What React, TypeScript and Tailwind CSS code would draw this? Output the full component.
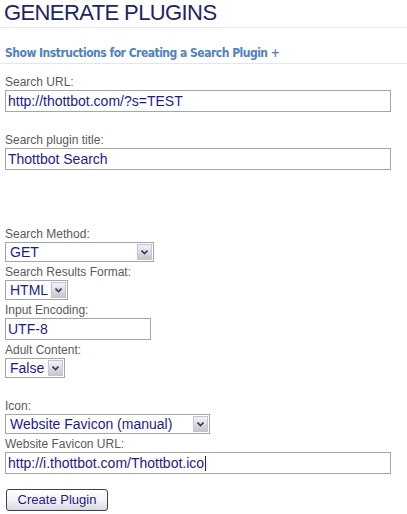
import React from "react";

const labelCls =
  "h-[15px] leading-[15px] text-[12px] text-[#5a5a5a] font-['Liberation_Sans',Arial,sans-serif] whitespace-nowrap";

const Label = ({ children }: { children: React.ReactNode }) => (
  <div className={labelCls}>{children}</div>
);

const TextBox = ({
  value,
  width,
  caret,
}: {
  value: string;
  width: string;
  caret?: boolean;
}) => (
  <div
    className={`${width} h-[22px] border border-[#a5a5a5] bg-white pl-[2px] flex items-center text-[14px] text-[#1b1b8c] font-['Liberation_Sans',Arial,sans-serif] whitespace-nowrap overflow-hidden`}
  >
    <span>{value}</span>
    {caret && <span className="w-px h-[15px] bg-[#1b1b8c] ml-[1px]" />}
  </div>
);

const SelectBox = ({ value, width }: { value: string; width: string }) => (
  <div
    className={`${width} h-[20px] border border-[#a5a5a5] bg-white flex items-stretch text-[14px] text-[#1b1b8c] font-['Liberation_Sans',Arial,sans-serif] whitespace-nowrap`}
  >
    <div className="flex-1 pl-[4px] flex items-center overflow-hidden">{value}</div>
    <div className="w-[15px] m-px border border-[#c3c3d3] bg-gradient-to-b from-[#f2f2f6] to-[#c6c6d4] flex items-center justify-center">
      <svg width="7" height="5" viewBox="0 0 7 5">
        <path d="M0.5 0.5 L3.5 3.5 L6.5 0.5" stroke="#3c3c4c" strokeWidth="1.6" fill="none" />
      </svg>
    </div>
  </div>
);

export default function App() {
  return (
    <div className="w-[407px] h-[514px] bg-white overflow-hidden">
      {/* page heading */}
      <div className="h-[28px] border-b border-[#e6e6e6] pl-[4px]">
        <h1 className="leading-[26px] text-[22px] text-[#1e2466] font-['Liberation_Sans',Arial,sans-serif] tracking-[-0.6px]">
          GENERATE PLUGINS
        </h1>
      </div>

      <div className="pt-[17px] pb-[2px] px-[5px] border-b border-[#e6e6e6]">
        <a className="block leading-[16px] text-[12px] font-bold text-[#4f82bd] font-['DejaVu_Sans_Condensed','Liberation_Sans',sans-serif] tracking-[-0.5px]">
          Show Instructions for Creating a Search Plugin +
        </a>
      </div>

      <form className="px-[5px] pt-[11px] flex flex-col">
        <Label>Search URL:</Label>
        <TextBox value="http://thottbot.com/?s=TEST" width="w-[386px]" />

        <div className="mt-[21px]">
          <Label>Search plugin title:</Label>
          <TextBox value="Thottbot Search" width="w-[386px]" />
        </div>

        <div className="mt-[57px]">
          <Label>Search Method:</Label>
          <SelectBox value="GET" width="w-[149px]" />
        </div>

        <div className="mt-[3px]">
          <Label>Search Results Format:</Label>
          <SelectBox value="HTML" width="w-[63px]" />
        </div>

        <div className="mt-[3px]">
          <Label>Input Encoding:</Label>
          <TextBox value="UTF-8" width="w-[146px]" />
        </div>

        <div className="mt-[3px]">
          <Label>Adult Content:</Label>
          <SelectBox value="False" width="w-[60px]" />
        </div>

        <div className="mt-[21px]">
          <Label>Icon:</Label>
          <SelectBox value="Website Favicon (manual)" width="w-[205px]" />
        </div>

        <div className="mt-[3px]">
          <Label>Website Favicon URL:</Label>
          <TextBox value="http://i.thottbot.com/Thottbot.ico" width="w-[386px]" caret />
        </div>

        <div className="mt-[12px]">
          <button
            type="button"
            className="ml-px w-[102px] h-[22px] rounded-[3px] border border-[#3f3f4f] bg-gradient-to-b from-white via-[#f4f4f6] to-[#d8d8e2] text-[13px] text-[#1b1b8c] font-['Liberation_Sans',Arial,sans-serif]"
          >
            Create Plugin
          </button>
        </div>
      </form>
    </div>
  );
}
